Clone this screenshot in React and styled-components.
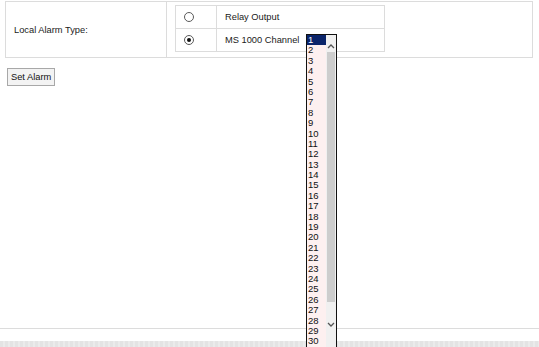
import React from "react";
import styled, { createGlobalStyle } from "styled-components";

const GlobalStyle = createGlobalStyle`
  html, body {
    margin: 0;
    padding: 0;
    background: #fff;
    font-family: "Liberation Sans", Arial, sans-serif;
    font-size: 9.3px;
    color: #1a1a1a;
    overflow: hidden;
  }
`;

const Page = styled.div`
  display: flex;
  flex-direction: column;
  height: 347px;
`;

const Content = styled.div`
  flex: 1;
  padding: 1px 6px 0 5px;
`;

const OuterTable = styled.table`
  width: 528px;
  border-collapse: collapse;
  border: 1px solid #dcdcdc;
`;

const LabelCell = styled.td`
  width: 152px;
  padding: 0 0 0 8px;
  border-right: 1px solid #dcdcdc;
  height: 55px;
  vertical-align: middle;
`;

const OptionsCell = styled.td`
  padding: 3px 8px 4px 8px;
  vertical-align: top;
`;

const InnerTable = styled.table`
  width: 210px;
  border-collapse: collapse;
  border: 1px solid #dcdcdc;
`;

const InnerRow = styled.tr`
  height: 23px;
  & + & td {
    border-top: 1px solid #dcdcdc;
  }
`;

const RadioCell = styled.td`
  width: 41px;
  text-align: left;
  border-right: 1px solid #dcdcdc;
  padding: 0 0 0 8px;
  box-sizing: border-box;
`;

const TextCell = styled.td`
  padding: 0 0 0 8px;
  position: relative;
`;

const Radio = styled.span`
  display: inline-flex;
  align-items: center;
  justify-content: center;
  width: 8px;
  height: 8px;
  border: 1px solid #5a5a5a;
  border-radius: 50%;
  background: #fff;
  vertical-align: middle;
  &::after {
    content: "";
    width: 4px;
    height: 4px;
    border-radius: 50%;
    background: ${(p) => (p.$checked ? "#111" : "transparent")};
  }
`;

const Button = styled.button`
  margin: 10px 0 0 2px;
  font-family: "Liberation Sans", Arial, sans-serif;
  font-size: 9.3px;
  color: #111;
  background: #f3f3f3;
  border: 1px solid #a8a8a8;
  padding: 2px 3px;
  height: 18px;
  line-height: 12px;
`;

const ListBox = styled.div`
  position: absolute;
  left: 89px;
  top: 5px;
  width: 29px;
  border: 1px solid #111;
  display: flex;
  background: #fdf0f0;
  z-index: 2;
`;

const Options = styled.div`
  width: 19px;
  display: flex;
  flex-direction: column;
`;

const Option = styled.div`
  height: 10.4px;
  line-height: 10.4px;
  font-size: 9.5px;
  padding-left: 1px;
  color: ${(p) => (p.$selected ? "#fff" : "#111")};
  background: ${(p) => (p.$selected ? "#0a246a" : "transparent")};
`;

const ScrollBar = styled.div`
  width: 10px;
  background: #f0f0f0;
  display: flex;
  flex-direction: column;
  align-items: center;
  padding-top: 8px;
`;

const Arrow = styled.svg`
  width: 8px;
  height: 6px;
  flex: none;
`;

const Thumb = styled.div`
  width: 8px;
  height: 250px;
  margin: 3px 0 20px;
  background: #cdcdcd;
`;

const Footer = styled.div`
  border-top: 1px solid #dcdcdc;
  height: 18px;
  display: flex;
  flex-direction: column;
  justify-content: flex-end;
`;

const Band = styled.div`
  height: 6px;
  background: repeating-linear-gradient(90deg, #e4e4e4 0 3px, #ebebeb 3px 5px);
`;

const numbers = Array.from({ length: 30 }, (_, i) => i + 1);

export default function App() {
  return (
    <>
      <GlobalStyle />
      <Page>
        <Content>
          <OuterTable>
            <tbody>
              <tr>
                <LabelCell>Local Alarm Type:</LabelCell>
                <OptionsCell>
                  <InnerTable>
                    <tbody>
                      <InnerRow>
                        <RadioCell>
                          <Radio />
                        </RadioCell>
                        <TextCell>Relay Output</TextCell>
                      </InnerRow>
                      <InnerRow>
                        <RadioCell>
                          <Radio $checked />
                        </RadioCell>
                        <TextCell>
                          MS 1000 Channel
                          <ListBox>
                            <Options>
                              {numbers.map((n) => (
                                <Option key={n} $selected={n === 1}>
                                  {n}
                                </Option>
                              ))}
                            </Options>
                            <ScrollBar>
                              <Arrow viewBox="0 0 8 6">
                                <path d="M1 5 L4 2 L7 5" fill="none" stroke="#555" strokeWidth="1.3" />
                              </Arrow>
                              <Thumb />
                              <Arrow viewBox="0 0 8 6">
                                <path d="M1 1 L4 4 L7 1" fill="none" stroke="#555" strokeWidth="1.3" />
                              </Arrow>
                            </ScrollBar>
                          </ListBox>
                        </TextCell>
                      </InnerRow>
                    </tbody>
                  </InnerTable>
                </OptionsCell>
              </tr>
            </tbody>
          </OuterTable>
          <Button>Set Alarm</Button>
        </Content>
        <Footer>
          <Band />
        </Footer>
      </Page>
    </>
  );
}
